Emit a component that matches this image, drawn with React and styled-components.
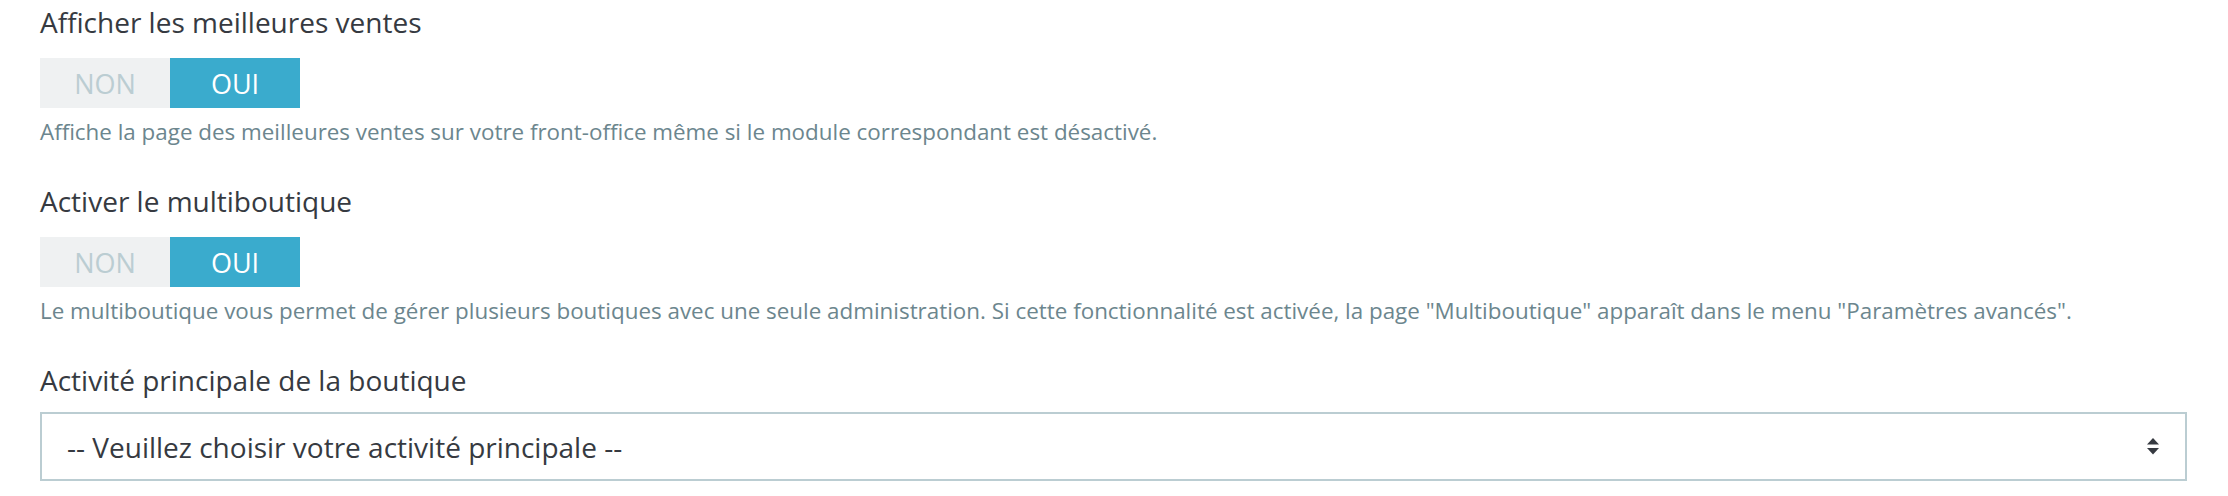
import styled, { createGlobalStyle } from "styled-components";

const GlobalStyle = createGlobalStyle`
  body {
    margin: 0;
    background: #ffffff;
    font-family: "Open Sans", "Liberation Sans", sans-serif;
    -webkit-font-smoothing: antialiased;
  }
`;

const Page = styled.div`
  display: flex;
  flex-direction: column;
  gap: 35px;
  padding: 3px 41px 0 40px;
`;

const FormGroup = styled.div`
  display: flex;
  flex-direction: column;
`;

const Label = styled.div`
  font-size: 28px;
  line-height: 38px;
  color: #363a41;
  margin-bottom: ${(p) => (p.tight ? "13px" : "17px")};
`;

const Switch = styled.div`
  display: flex;
  width: 260px;
  height: 50px;
`;

const SwitchOption = styled.div`
  flex: 1;
  display: flex;
  justify-content: center;
  align-items: center;
  font-size: 27px;
  background-color: ${(p) => (p.active ? "#3aabcd" : "#eff1f2")};
  color: ${(p) => (p.active ? "#ffffff" : "#bbcdd2")};
`;

const Help = styled.div`
  margin-top: 9px;
  font-size: 22.4px;
  line-height: 30px;
  color: #6c868e;
`;

const Select = styled.div`
  display: flex;
  justify-content: space-between;
  align-items: center;
  height: 69px;
  box-sizing: border-box;
  border: 2px solid #bbcdd2;
  padding: 0 26px 0 25px;
  font-size: 28px;
  color: #363a41;
`;

const SortIcon = () => (
  <svg width="12" height="17" viewBox="0 0 12 17">
    <path d="M6 0 L12 6.5 H0 Z" fill="#363a41" />
    <path d="M0 10 H12 L6 16.5 Z" fill="#363a41" />
  </svg>
);

function Toggle() {
  return (
    <Switch>
      <SwitchOption>NON</SwitchOption>
      <SwitchOption active>OUI</SwitchOption>
    </Switch>
  );
}

export default function App() {
  return (
    <>
      <GlobalStyle />
      <Page>
        <FormGroup>
          <Label>Afficher les meilleures ventes</Label>
          <Toggle />
          <Help>
            Affiche la page des meilleures ventes sur votre front-office même si le module correspondant est désactivé.
          </Help>
        </FormGroup>
        <FormGroup>
          <Label>Activer le multiboutique</Label>
          <Toggle />
          <Help>
            Le multiboutique vous permet de gérer plusieurs boutiques avec une seule administration. Si cette
            fonctionnalité est activée, la page "Multiboutique" apparaît dans le menu "Paramètres avancés".
          </Help>
        </FormGroup>
        <FormGroup>
          <Label tight>Activité principale de la boutique</Label>
          <Select>
            <span>-- Veuillez choisir votre activité principale --</span>
            <SortIcon />
          </Select>
        </FormGroup>
      </Page>
    </>
  );
}
